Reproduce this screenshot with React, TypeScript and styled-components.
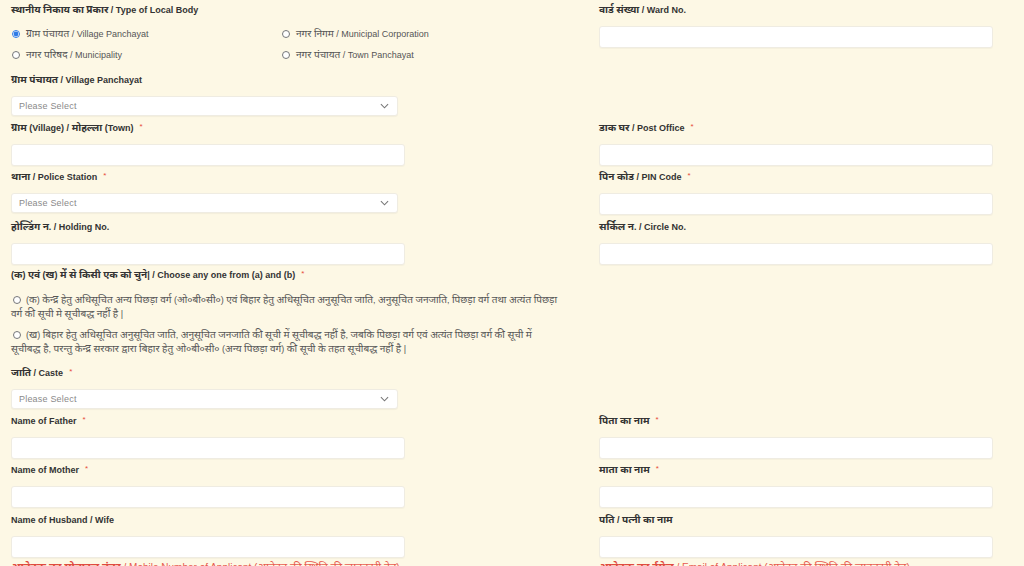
import React from 'react';
import styled, { createGlobalStyle } from 'styled-components';

const GlobalStyle = createGlobalStyle`
    html, body {
        margin: 0;
        padding: 0;
        background: #fdf8e5;
    }
    body {
        font-family: 'Liberation Sans', Arial, 'Noto Sans', 'Noto Sans Devanagari', sans-serif;
    }
`;

const Page = styled.div`
    padding: 3px 31px 0 11px;
    height: 566px;
    overflow: hidden;
    box-sizing: border-box;
`;

const Row = styled.div`
    display: grid;
    grid-template-columns: 394px 394px;
    column-gap: 194px;
    align-items: start;
`;

const Field = styled.div<{ $gap?: number }>`
    margin-bottom: ${(p) => p.$gap ?? 4}px;
`;

const Label = styled.label<{ $mb?: number }>`
    display: block;
    height: 14px;
    font-size: 9px;
    line-height: 14px;
    font-weight: bold;
    color: #333;
    margin-bottom: ${(p) => p.$mb ?? 9}px;
    white-space: nowrap;
`;

// devanagari glyphs come out small next to latin text, bump them up
const Hi = styled.span`
    font-size: 1.12em;
    line-height: 0;
`;

const Req = styled.span`
    color: #e74c3c;
    font-size: 8px;
    font-weight: normal;
    line-height: 0;
    margin-left: 6px;
    vertical-align: 2px;
`;

const TextInput = styled.input`
    display: block;
    width: 394px;
    height: 22px;
    box-sizing: border-box;
    border: 1px solid #efece2;
    border-radius: 3px;
    background: #fff;
    box-shadow: 0 1px 1px rgba(0, 0, 0, 0.03);
    outline: none;
`;

const SelectBox = styled.div`
    width: 387px;
    height: 20px;
    box-sizing: border-box;
    border: 1px solid #efece2;
    border-radius: 3px;
    background: #fff;
    box-shadow: 0 1px 1px rgba(0, 0, 0, 0.04);
    display: flex;
    align-items: center;
    justify-content: space-between;
    padding: 0 8px 0 7px;
    font-size: 9px;
    color: #8a8a8a;
    letter-spacing: 0.2px;
`;

const Chevron = styled.svg`
    width: 9px;
    height: 6px;
`;

const RadioGrid = styled.div`
    display: grid;
    grid-template-columns: 270px auto;
    grid-auto-rows: 21px;
    align-items: center;
    margin-bottom: 8px;
`;

const RadioOption = styled.label`
    display: flex;
    align-items: center;
    font-size: 9px;
    color: #555;
    white-space: nowrap;
`;

const Radio = styled.input.attrs({ type: 'radio' })`
    width: 8px;
    height: 8px;
    margin: 0 6px 0 1px;
    accent-color: #2f7be5;
`;

const Choice = styled.label<{ $mb?: number }>`
    display: block;
    width: 548px;
    font-size: 9px;
    line-height: 14px;
    color: #555;
    margin-bottom: ${(p) => p.$mb ?? 7}px;
`;

const InlineRadio = styled(Radio)`
    vertical-align: -1px;
    margin: 0 5px 0 2px;
`;

const FooterNote = styled.div`
    margin-top: -1px;
    font-size: 10px;
    line-height: 14px;
    color: #e85a4f;
    white-space: nowrap;
    overflow: hidden;
    b {
        font-weight: bold;
        color: #e04a3f;
        text-decoration: underline;
    }
`;

const T = ({ children }: { children: string }) => (
    <span>
        {children.split(/([\u0900-\u097F]+)/).map((part, i) =>
            /[\u0900-\u097F]/.test(part) ? <Hi key={i}>{part}</Hi> : part
        )}
    </span>
);

const Select = () => (
    <SelectBox>
        <span>Please Select</span>
        <Chevron viewBox="0 0 10 6">
            <path d="M1 1l4 4 4-4" fill="none" stroke="#777" strokeWidth="1.2" />
        </Chevron>
    </SelectBox>
);

type FieldProps = { label: string; required?: boolean; select?: boolean; gap?: number };

const FormField = ({ label, required, select, gap }: FieldProps) => (
    <Field $gap={gap}>
        <Label>
            <T>{label}</T>
            {required && <Req>*</Req>}
        </Label>
        {select ? <Select /> : <TextInput />}
    </Field>
);

const App = () => {
    return (
        <Page>
            <GlobalStyle />
            <Row>
                <div>
                    <Label $mb={6}>
                        <T>स्थानीय निकाय का प्रकार / Type of Local Body</T>
                    </Label>
                    <RadioGrid>
                        <RadioOption>
                            <Radio name="lb" defaultChecked />
                            <T>ग्राम पंचायत / Village Panchayat</T>
                        </RadioOption>
                        <RadioOption>
                            <Radio name="lb" />
                            <T>नगर निगम / Municipal Corporation</T>
                        </RadioOption>
                        <RadioOption>
                            <Radio name="lb" />
                            <T>नगर परिषद / Municipality</T>
                        </RadioOption>
                        <RadioOption>
                            <Radio name="lb" />
                            <T>नगर पंचायत / Town Panchayat</T>
                        </RadioOption>
                    </RadioGrid>
                    <FormField label="ग्राम पंचायत / Village Panchayat" select gap={5} />
                </div>
                <FormField label="वार्ड संख्या / Ward No." />
            </Row>
            <Row>
                <FormField label="ग्राम (Village) / मोहल्ला (Town)" required />
                <FormField label="डाक घर / Post Office" required />
            </Row>
            <Row>
                <FormField label="थाना / Police Station" required select />
                <FormField label="पिन कोड / PIN Code" required gap={5} />
            </Row>
            <Row>
                <FormField label="होल्डिंग न. / Holding No." gap={3} />
                <FormField label="सर्किल न. / Circle No." gap={3} />
            </Row>
            <Label $mb={11}>
                <T>(क) एवं (ख) में से किसी एक को चुने| / Choose any one from (a) and (b)</T>
                <Req>*</Req>
            </Label>
            <Choice>
                <InlineRadio name="ab" />
                <T>
                    (क) केन्द्र हेतु अधिसूचित अन्य पिछड़ा वर्ग (ओ०बी०सी०) एवं बिहार हेतु अधिसूचित अनुसूचित जाति, अनुसूचित जनजाति, पिछड़ा वर्ग तथा अत्यंत पिछड़ा वर्ग की सूची मे सूचीबद्ध नहीं है |
                </T>
            </Choice>
            <Choice $mb={10}>
                <InlineRadio name="ab" />
                <T>
                    (ख) बिहार हेतु अधिसूचित अनुसूचित जाति, अनुसूचित जनजाति की सूची में सूचीबद्ध नहीं है, जबकि पिछड़ा वर्ग एवं अत्यंत पिछड़ा वर्ग की सूची में सूचीबद्ध है, परन्तु केन्द्र सरकार द्वारा बिहार हेतु ओ०बी०सी० (अन्य पिछड़ा वर्ग) की सूची के तहत सूचीबद्ध नहीं है |
                </T>
            </Choice>
            <FormField label="जाति / Caste" required select gap={5} />
            <Row>
                <FormField label="Name of Father" required />
                <FormField label="पिता का नाम" required />
            </Row>
            <Row>
                <FormField label="Name of Mother" required gap={5} />
                <FormField label="माता का नाम" required gap={5} />
            </Row>
            <Row>
                <FormField label="Name of Husband / Wife" />
                <FormField label="पति / पत्नी का नाम" />
            </Row>
            <Row>
                <FooterNote>
                    <b>
                        <T>आवेदक का मोबाइल नंबर</T>
                    </b>{' '}
                    <T>/ Mobile Number of Applicant (आवेदन की स्थिति की जानकारी हेतु)</T>
                </FooterNote>
                <FooterNote>
                    <b>
                        <T>आवेदक का ईमेल</T>
                    </b>{' '}
                    <T>/ Email of Applicant (आवेदन की स्थिति की जानकारी हेतु)</T>
                </FooterNote>
            </Row>
        </Page>
    );
};

export default App;
